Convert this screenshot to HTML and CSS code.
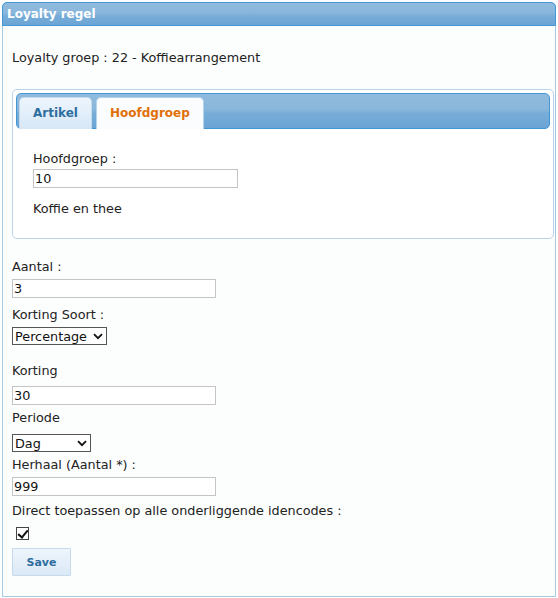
FILE: index.html
```html
<!DOCTYPE html>
<html lang="nl">

<head>
<title>Loyalty regel</title>
<meta charset="utf-8" />
<meta name="viewport" content="width=device-width, initial-scale=1.0">

<link rel="stylesheet" href="styles.css">
</head>

<body>
<div class="dialog">
  <div class="dialog-title">Loyalty regel</div>

  <div class="dialog-content">
    <p class="group">Loyalty groep : 22 - Koffiearrangement</p>

    <div class="tabs">
      <ul class="tab-nav">
        <li class="tab"><a href="#artikel">Artikel</a></li>
        <li class="tab active"><a href="#hoofdgroep">Hoofdgroep</a></li>
      </ul>
      <div class="tab-panel" id="hoofdgroep">
        <label class="lbl" for="hoofdgroep-nr">Hoofdgroep :</label>
        <input class="txt txt-tight" type="text" id="hoofdgroep-nr" value="10">
        <p class="desc">Koffie en thee</p>
      </div>
    </div>

    <form class="rule-form" onsubmit="return false">
      <label class="lbl lbl-aantal" for="aantal">Aantal :</label>
      <input class="txt" type="text" id="aantal" value="3">

      <label class="lbl lbl-soort" for="soort">Korting Soort :</label>
      <span class="select select-soort">
        <select id="soort">
          <option>Percentage</option>
          <option>Bedrag</option>
        </select>
        <svg class="chevron" width="10" height="7" viewBox="0 0 10 7"><path d="M1 1.2 L5 5.2 L9 1.2" fill="none" stroke="#111" stroke-width="1.8"/></svg>
      </span>

      <label class="lbl lbl-korting" for="korting">Korting</label>
      <input class="txt txt-korting" type="text" id="korting" value="30">

      <label class="lbl lbl-periode" for="periode">Periode</label>
      <span class="select select-periode">
        <select id="periode">
          <option>Dag</option>
          <option>Week</option>
          <option>Maand</option>
        </select>
        <svg class="chevron" width="10" height="7" viewBox="0 0 10 7"><path d="M1 1.2 L5 5.2 L9 1.2" fill="none" stroke="#111" stroke-width="1.8"/></svg>
      </span>

      <label class="lbl lbl-herhaal" for="herhaal">Herhaal (Aantal *) :</label>
      <input class="txt" type="text" id="herhaal" value="999">

      <label class="lbl lbl-direct" for="direct">Direct toepassen op alle onderliggende idencodes :</label>
      <input class="check" type="checkbox" id="direct" checked>

      <button class="btn" type="submit">Save</button>
    </form>
  </div>
</div>
</body>

</html>
```

FILE: styles.css
```css
body {
  margin: 0;
  background-color: white;
  font-family: "DejaVu Sans", Verdana, sans-serif;
  font-size: 12.8px;
  color: #222;
}

p {
  margin: 0;
  line-height: 16px;
}

/* dialog frame */
.dialog {
  margin: 2px 2px 0 2px;
  border: 1px solid #a6c9e2;
  border-radius: 5px 5px 0 0;
  background: #fcfdfd;
}

.dialog-title {
  margin: -1px -1px 0 -1px;
  padding: 3px 5px 3px 4px;
  border: 1px solid #4297d7;
  border-radius: 5px 5px 0 0;
  background: linear-gradient(to bottom, #90bbde 0%, #89b6db 45%, #77acd8 58%, #6ba5d5 100%);
  color: #fff;
  font-size: 12px;
  font-weight: bold;
  line-height: 16px;
}

.dialog-content {
  padding: 0 1px 20px 9px;
}

.group {
  margin-top: 24px;
}

/* tabs */
.tabs {
  margin-top: 23px;
  padding: 3px;
  border: 1px solid #b9d4ea;
  border-radius: 5px;
  background: #fff;
}

.tab-nav {
  display: flex;
  gap: 4px;
  margin: 0;
  padding: 3px 2px 0 2px;
  list-style: none;
  border: 1px solid #4297d7;
  border-radius: 5px;
  background: linear-gradient(to bottom, #90bbde 0%, #89b6db 45%, #77acd8 58%, #6ba5d5 100%);
}

.tab {
  margin-bottom: -1px;
  border: 1px solid #c5dbec;
  border-bottom: 0;
  border-radius: 5px 5px 0 0;
  background: linear-gradient(to bottom, #edf5fc 0%, #e2eefa 50%, #d6e7f7 100%);
}

.tab a {
  display: block;
  padding: 7px 13px 8px 13px;
  font-size: 12px;
  font-weight: bold;
  line-height: 16px;
  color: #2e6e9e;
  text-decoration: none;
}

.tab.active {
  border-color: #b3d3ee;
  background: #fbfcfd;
}

.tab.active a {
  color: #e17009;
}

.tab-panel {
  padding: 22px 17px 18px 17px;
}

.desc {
  margin-top: 13px;
}

/* form fields */
.lbl {
  display: block;
  line-height: 16px;
}

.txt {
  display: block;
  box-sizing: border-box;
  width: 204px;
  height: 19px;
  margin: 4px 0 0 0;
  padding: 0 1px;
  border: 1px solid #c4c4c4;
  background: #fff;
  font-family: "DejaVu Sans", Verdana, sans-serif;
  font-size: 12.8px;
  color: #111;
  outline: none;
}

.txt-tight {
  width: 205px;
  margin-top: 2px;
}

.lbl-aantal {
  margin-top: 20px;
}

.lbl-soort {
  margin-top: 9px;
}

.lbl-korting {
  margin-top: 18px;
}

.txt-korting {
  margin-top: 7px;
}

.lbl-periode {
  margin-top: 5px;
}

.lbl-herhaal {
  margin-top: 5px;
}

.lbl-direct {
  margin-top: 7px;
}

.select {
  display: flex;
  align-items: center;
  box-sizing: border-box;
  height: 18px;
  margin-top: 4px;
  border: 1px solid #555;
  background: #fff;
}

.select select {
  flex: 1;
  min-width: 0;
  height: 16px;
  margin: 0;
  padding: 0 0 0 2px;
  border: 0;
  background: transparent;
  font-family: "DejaVu Sans", Verdana, sans-serif;
  font-size: 12.8px;
  color: #111;
  -webkit-appearance: none;
  appearance: none;
  outline: none;
}

.chevron {
  flex: none;
  margin-right: 3px;
  pointer-events: none;
}

.select-soort {
  width: 95px;
}

.select-periode {
  width: 79px;
  margin-top: 8px;
}

.check {
  display: block;
  position: relative;
  box-sizing: border-box;
  width: 13px;
  height: 13px;
  margin: 8px 0 0 4px;
  border: 1px solid #444;
  background: #fff;
  -webkit-appearance: none;
  appearance: none;
}

.check:checked::after {
  content: "";
  position: absolute;
  left: 3px;
  top: 0px;
  width: 4px;
  height: 8px;
  border-right: 2px solid #111;
  border-bottom: 2px solid #111;
  transform: rotate(40deg);
}

.btn {
  display: block;
  box-sizing: border-box;
  width: 59px;
  height: 28px;
  margin-top: 8px;
  border: 1px solid #c5dbec;
  border-radius: 1px;
  background: linear-gradient(to bottom, #eef5fc 0%, #e4eff9 50%, #dbe9f7 100%);
  font-family: "DejaVu Sans", Verdana, sans-serif;
  font-size: 11px;
  font-weight: bold;
  color: #2e6e9e;
  cursor: pointer;
}
```
